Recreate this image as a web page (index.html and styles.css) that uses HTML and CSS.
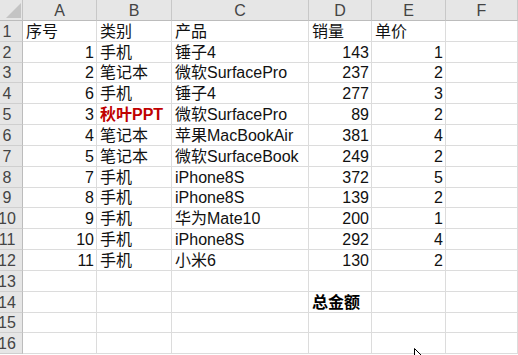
FILE: index.html
```html
<!DOCTYPE html>
<html lang="zh">
<head>
<meta charset="utf-8">
<title>Sheet</title>
<link rel="stylesheet" href="styles.css">
</head>
<body>
<div class="sheet">
  <div class="cell corner"><svg width="15" height="15" viewBox="0 0 15 15"><polygon points="0,15 15,15 15,0" fill="#c4c4c4"/></svg></div>
  <div class="cell ch">A</div><div class="cell ch">B</div><div class="cell ch">C</div><div class="cell ch">D</div><div class="cell ch">E</div><div class="cell ch">F</div>

  <div class="cell rh">1</div><div class="cell">序号</div><div class="cell">类别</div><div class="cell">产品</div><div class="cell">销量</div><div class="cell">单价</div><div class="cell"></div>
  <div class="cell rh">2</div><div class="cell n">1</div><div class="cell">手机</div><div class="cell">锤子4</div><div class="cell n">143</div><div class="cell n">1</div><div class="cell"></div>
  <div class="cell rh">3</div><div class="cell n">2</div><div class="cell">笔记本</div><div class="cell">微软SurfacePro</div><div class="cell n">237</div><div class="cell n">2</div><div class="cell"></div>
  <div class="cell rh">4</div><div class="cell n">6</div><div class="cell">手机</div><div class="cell">锤子4</div><div class="cell n">277</div><div class="cell n">3</div><div class="cell"></div>
  <div class="cell rh">5</div><div class="cell n">3</div><div class="cell red">秋叶PPT</div><div class="cell">微软SurfacePro</div><div class="cell n">89</div><div class="cell n">2</div><div class="cell"></div>
  <div class="cell rh">6</div><div class="cell n">4</div><div class="cell">笔记本</div><div class="cell">苹果MacBookAir</div><div class="cell n">381</div><div class="cell n">4</div><div class="cell"></div>
  <div class="cell rh">7</div><div class="cell n">5</div><div class="cell">笔记本</div><div class="cell">微软SurfaceBook</div><div class="cell n">249</div><div class="cell n">2</div><div class="cell"></div>
  <div class="cell rh">8</div><div class="cell n">7</div><div class="cell">手机</div><div class="cell">iPhone8S</div><div class="cell n">372</div><div class="cell n">5</div><div class="cell"></div>
  <div class="cell rh">9</div><div class="cell n">8</div><div class="cell">手机</div><div class="cell">iPhone8S</div><div class="cell n">139</div><div class="cell n">2</div><div class="cell"></div>
  <div class="cell rh">10</div><div class="cell n">9</div><div class="cell">手机</div><div class="cell">华为Mate10</div><div class="cell n">200</div><div class="cell n">1</div><div class="cell"></div>
  <div class="cell rh">11</div><div class="cell n">10</div><div class="cell">手机</div><div class="cell">iPhone8S</div><div class="cell n">292</div><div class="cell n">4</div><div class="cell"></div>
  <div class="cell rh">12</div><div class="cell n">11</div><div class="cell">手机</div><div class="cell">小米6</div><div class="cell n">130</div><div class="cell n">2</div><div class="cell"></div>
  <div class="cell rh">13</div><div class="cell"></div><div class="cell"></div><div class="cell"></div><div class="cell"></div><div class="cell"></div><div class="cell"></div>
  <div class="cell rh">14</div><div class="cell"></div><div class="cell"></div><div class="cell"></div><div class="cell bold">总金额</div><div class="cell"></div><div class="cell"></div>
  <div class="cell rh">15</div><div class="cell"></div><div class="cell"></div><div class="cell"></div><div class="cell"></div><div class="cell"></div><div class="cell"></div>
  <div class="cell rh">16</div><div class="cell"></div><div class="cell"></div><div class="cell"></div><div class="cell"></div><div class="cell"></div><div class="cell"></div>
</div>
<svg class="pointer" width="10" height="14" viewBox="0 0 10 14"><path d="M0.5 0.5 L0.5 11 L3 8.6 L5 13 L6.6 12.3 L4.7 8 L8 8 Z" fill="#fff" stroke="#000" stroke-width="1"/></svg>
</body>
</html>
```
FILE: styles.css
```css
html, body {
  margin: 0;
  padding: 0;
  background: #fff;
  overflow: hidden;
}
body {
  width: 518px;
  height: 355px;
  position: relative;
  font-family: "Liberation Sans", "Noto Sans CJK SC", sans-serif;
  font-size: 16px;
  color: #111;
}
.sheet {
  display: grid;
  grid-template-columns: 23px 74px 75px 137px 63px 74px 1fr;
  grid-template-rows: 21px repeat(16, 20.84px);
}
.cell {
  box-sizing: border-box;
  border-right: 1px solid #dcdcdc;
  border-bottom: 1px solid #dcdcdc;
  display: flex;
  align-items: flex-end;
  line-height: 18px;
  padding: 0 3px;
  white-space: nowrap;
  overflow: visible;
}
.n {
  justify-content: flex-end;
  padding-right: 2px;
}
.red {
  color: #c00000;
  font-weight: bold;
}
.bold {
  font-weight: bold;
  color: #000;
}
.corner {
  background: #e6e6e6;
  border-right-color: #c4c4c4;
  border-bottom-color: #bcbcbc;
  justify-content: flex-end;
  padding: 0 1px 2px 0;
}
.corner svg {
  display: block;
}
.ch {
  background: #e6e6e6;
  color: #444;
  justify-content: center;
  border-right-color: #c8c8c8;
  border-bottom-color: #bcbcbc;
}
.rh {
  background: #e6e6e6;
  color: #444;
  justify-content: center;
  padding: 0 8px 0 0;
  border-right-color: #bcbcbc;
  border-bottom-color: #cfcfcf;
}
.pointer {
  position: absolute;
  left: 414px;
  top: 348px;
}
```
